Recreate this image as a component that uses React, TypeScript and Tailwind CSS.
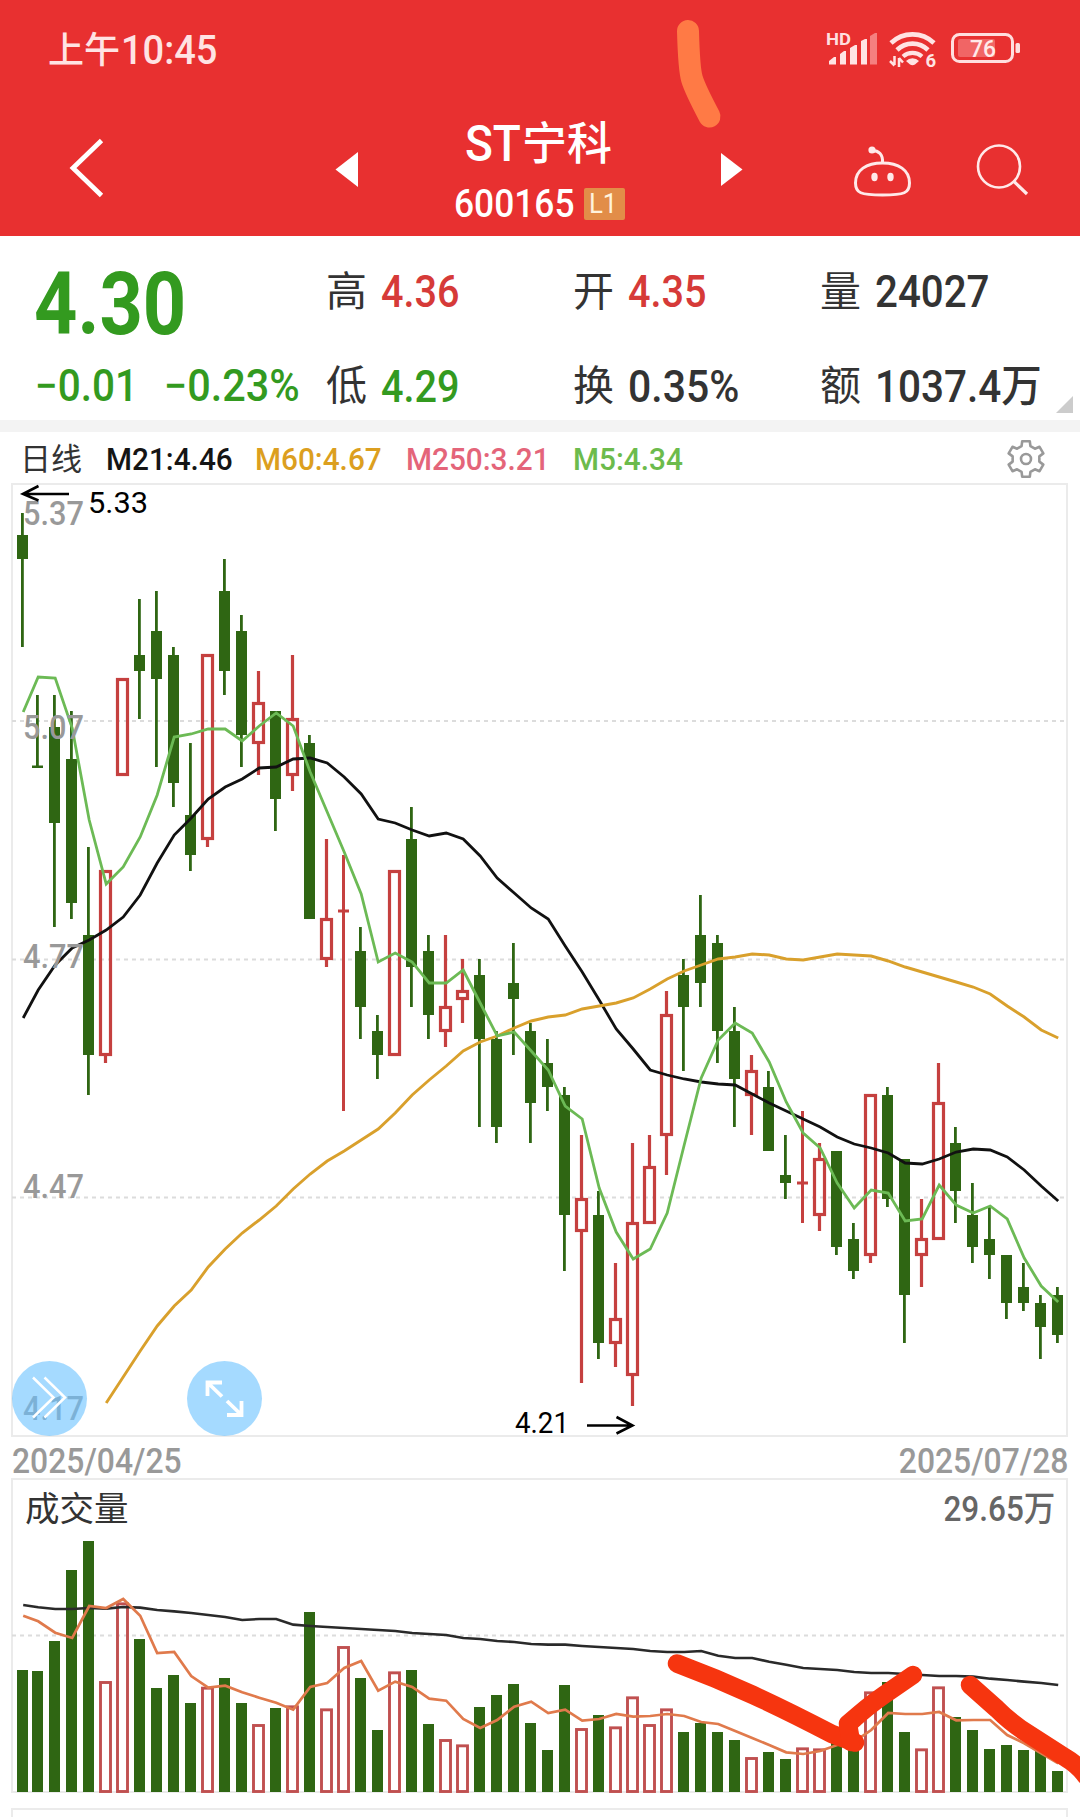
import type { ReactNode } from "react";
import clsx from "clsx";

type Candle = ["g" | "r", number, number, number, number];

// [colour, high, body top, body bottom, low]
const CANDLES: Candle[] = [
  ["g", 513, 535, 559, 647], ["g", 695, 765.5, 768, 768], ["g", 695, 727, 823, 927], ["g", 711, 759, 903, 919],
  ["g", 847, 935, 1055, 1095], ["r", 870, 870, 1056, 1063], ["r", 678, 678, 776, 776], ["g", 599, 655, 671, 719],
  ["g", 591, 631, 679, 767], ["g", 647, 655, 783, 807], ["g", 743, 815, 855, 871], ["r", 654, 654, 840, 847],
  ["g", 559, 591, 671, 695], ["g", 615, 631, 735, 767], ["r", 671, 702, 744, 775], ["g", 711, 711, 799, 831],
  ["r", 655, 718, 776, 791], ["g", 735, 743, 919, 919], ["r", 839, 918, 960, 967], ["r", 855, 911, 911, 1111],
  ["g", 927, 951, 1007, 1039], ["g", 1015, 1031, 1055, 1079], ["r", 870, 870, 1056, 1056], ["g", 807, 839, 967, 1007],
  ["g", 935, 951, 1015, 1039], ["r", 935, 1006, 1032, 1047], ["r", 959, 990, 1000, 1023], ["g", 959, 975, 1039, 1127],
  ["g", 1031, 1039, 1127, 1143], ["g", 943, 983, 999, 1055], ["g", 1023, 1031, 1103, 1143], ["g", 1039, 1063, 1087, 1111],
  ["g", 1087, 1095, 1215, 1271], ["r", 1135, 1198, 1232, 1383], ["g", 1191, 1215, 1343, 1359], ["r", 1263, 1318, 1344, 1367],
  ["r", 1143, 1222, 1376, 1406], ["r", 1135, 1166, 1224, 1224], ["r", 991, 1014, 1136, 1175], ["g", 959, 975, 1007, 1071],
  ["g", 895, 935, 983, 1007], ["g", 935, 943, 1031, 1063], ["g", 1007, 1031, 1079, 1127], ["r", 1055, 1070, 1096, 1135],
  ["g", 1071, 1087, 1151, 1151], ["g", 1135, 1175, 1183, 1199], ["r", 1111, 1183, 1183, 1223], ["r", 1143, 1158, 1216, 1231],
  ["g", 1151, 1151, 1247, 1255], ["g", 1223, 1239, 1271, 1279], ["r", 1094, 1094, 1256, 1263], ["g", 1087, 1095, 1199, 1207],
  ["g", 1159, 1159, 1295, 1343], ["r", 1199, 1238, 1256, 1287], ["r", 1063, 1102, 1240, 1240], ["g", 1127, 1143, 1191, 1223],
  ["g", 1183, 1215, 1247, 1263], ["g", 1207, 1239, 1255, 1279], ["g", 1255, 1255, 1303, 1319], ["g", 1263, 1287, 1303, 1311],
  ["g", 1295, 1303, 1327, 1359], ["g", 1287, 1295, 1335, 1343],
];

const M5 = [
  712, 677, 678, 728, 820, 884, 867, 837, 795, 737, 734, 729, 729, 741, 726, 713, 726, 772, 812, 852, 894, 962, 953, 962,
  983, 983, 970, 1003, 1036, 1032, 1051, 1070, 1106, 1119, 1188, 1232, 1259, 1249, 1213, 1145, 1078, 1040, 1023, 1033,
  1062, 1102, 1133, 1148, 1183, 1208, 1190, 1193, 1221, 1219, 1185, 1205, 1213, 1206, 1219, 1258, 1286, 1302,
];

const M21 = [
  1018, 990, 965, 948, 940, 930, 917, 895, 863, 835, 818, 799, 787, 779, 768, 767, 759, 758, 763, 777, 794, 819, 823, 830,
  836, 833, 839, 856, 878, 893, 908, 919, 946, 972, 1000, 1029, 1049, 1070, 1075, 1079, 1082, 1084, 1085, 1094, 1103, 1111,
  1119, 1127, 1137, 1144, 1148, 1153, 1163, 1164, 1159, 1152, 1149, 1150, 1157, 1170, 1186, 1201,
];

// starts at the sixth candle
const M60 = [
  1403, 1377, 1351, 1326, 1306, 1290, 1267, 1249, 1233, 1220, 1206, 1189, 1174, 1161, 1151, 1140, 1129, 1113, 1095, 1080,
  1066, 1051, 1042, 1036, 1028, 1021, 1017, 1015, 1009, 1006, 1003, 998, 989, 979, 971, 965, 959, 957, 954, 955, 959, 960,
  957, 954, 955, 956, 961, 967, 972, 977, 982, 987, 994, 1006, 1017, 1030, 1038,
];

const VOL = [
  1020, 1023, 933, 720, 633, 1053, 817, 927, 1074, 1035, 1119, 1070, 1044, 1119, 1182, 1134, 1126, 846, 1135, 948, 1044,
  1200, 1024, 1020, 1182, 1227, 1243, 1131, 1095, 1062, 1179, 1260, 1065, 1194, 1155, 1189, 1099, 1182, 1135, 1206, 1179,
  1206, 1230, 1281, 1266, 1287, 1252, 1255, 1225, 1250, 1084, 1056, 1206, 1255, 1069, 1161, 1200, 1257, 1245, 1260, 1263, 1323,
];

const VOL_SLOW = [
  825, 832, 837, 837, 834, 836, 831, 833, 840, 844, 849, 855, 861, 870, 867, 867, 884, 888, 891, 894, 897, 900, 903, 909,
  912, 915, 924, 927, 933, 936, 942, 944, 944, 948, 951, 954, 957, 963, 966, 966, 963, 977, 984, 984, 995, 1004, 1014, 1017,
  1020, 1026, 1029, 1029, 1032, 1035, 1038, 1038, 1040, 1046, 1050, 1055, 1059, 1065,
];

const VOL_FAST = [
  857, 874, 908, 924, 828, 834, 807, 857, 969, 966, 1038, 1073, 1067, 1087, 1103, 1118, 1139, 1071, 1059, 1014, 993, 1082,
  1055, 1071, 1106, 1112, 1167, 1194, 1170, 1130, 1115, 1149, 1139, 1172, 1167, 1152, 1160, 1158, 1152, 1158, 1176, 1182,
  1203, 1224, 1245, 1267, 1272, 1263, 1245, 1235, 1200, 1149, 1152, 1152, 1146, 1171, 1170, 1170, 1215, 1240, 1270, 1300,
];

const GREEN = "#2f6613";
const RED = "#c5403f";

const cx = (i: number) => (i === 0 ? 22.5 : 20.5 + i * 17);
const vy = (v: number) => 1330 + v / 3;
const line = (ys: number[], from = 0) => ys.map((y, i) => `${cx(i + from) + 0.7},${y}`).join(" ");

const gearPath = () => {
  const pts: string[] = [];
  for (let k = 0; k < 6; k++) {
    for (const [r, d] of [[13.6, -19], [18.2, -12], [18.2, 12], [13.6, 19]]) {
      const a = ((k * 60 + d - 90) * Math.PI) / 180;
      pts.push(`${(20 + r * Math.cos(a)).toFixed(2)},${(20 + r * Math.sin(a)).toFixed(2)}`);
    }
  }
  return pts.join(" ");
};

const Num = ({ className, children }: { className?: string; children: ReactNode }) => (
  <span className={clsx("inline-block shrink-0 origin-left whitespace-pre leading-none", className)}>{children}</span>
);

const StatusIcons = () => (
  <svg className="h-[44px] w-[200px]" viewBox="824 28 200 44" fill="none">
    <text x="826" y="45.5" fontSize="16.5" fontWeight="700" fill="#ffdfdf" textLength="25" lengthAdjust="spacingAndGlyphs">HD</text>
    <g fill="#ffe3e3">
      <path d="M829 62l5-4h2v7.500h-7zM840 55l4-3h2v13.500h-6zM850 49l5-3h2v19.500h-7zM861 42l4-2h2v25.500h-6z" />
      <path d="M870 37l5-3h2v31.500h-7z" fill="#f58080" />
      <path d="M906 62a9 9 0 0 1 13 0l-4 3.500q-2.500 1.500-5 0z" />
    </g>
    <g stroke="#ffe3e3" strokeWidth="4.600">
      <path d="M891 44a31 31 0 0 1 43 0" />
      <path d="M897 51a22 22 0 0 1 31 0" />
      <path d="M903 57.500a14.500 14.500 0 0 1 19 0" strokeWidth="4.200" />
    </g>
    <path d="M894.500 57v9M890 62l4.500 4.500M899 68v-9M899 59l4 4.500" stroke="#ffe3e3" strokeWidth="2.500" />
    <text x="925.500" y="67.500" fontSize="18.5" fontWeight="700" fill="#ffe3e3">6</text>
    <rect x="952.500" y="35.500" width="60" height="27" rx="7" stroke="#ffdede" strokeWidth="3" />
    <rect x="958" y="40" width="37" height="18" rx="2" fill="#f16565" />
    <rect x="1015.500" y="44" width="4.500" height="10" rx="1.500" fill="#ffdede" />
    <text x="970" y="58" fontSize="24" fontWeight="500" fill="#ffe9e9" textLength="26" lengthAdjust="spacingAndGlyphs">76</text>
  </svg>
);

const Header = () => (
  <header className="h-[236px] bg-[#e83030] text-white">
    <div className="flex h-[98px] items-center justify-between pl-[48px] pr-[56px]">
      <div className="flex items-center pt-[3px] text-[#ffe3e3]">
        <span className="w-[73px] text-[36px] font-medium leading-none">上午</span>
        <Num className="scale-x-[.95] text-[40px] font-medium">10:45</Num>
      </div>
      <StatusIcons />
    </div>
    <div className="flex h-[138px] justify-between">
      <svg className="h-[138px] w-[440px]" viewBox="0 98 440 138" fill="none">
        <path d="M101.500 140.500L73 168l28.500 27.500" stroke="#fff" strokeWidth="4.800" />
        <path d="M335.500 169.500L358 152v35z" fill="#fff" />
      </svg>
      <div className="flex w-[180px] flex-col pt-[21px]">
        <div className="flex h-[50px] items-center pl-[25px] font-medium">
          <Num className="w-[57px] scale-x-[.92] text-[50px]">ST</Num>
          <span className="whitespace-nowrap text-[45px] leading-none">宁科</span>
        </div>
        <div className="flex h-[50px] items-center pl-[14px] pt-[20px]">
          <Num className="w-[130px] scale-x-[.93] text-[38px] font-medium">600165</Num>
          <span className="flex h-[32px] w-[41px] shrink-0 items-center justify-center rounded-xs bg-[#e28d48]">
            <Num className="origin-center scale-x-[.92] text-[28px] text-[#fff3dc]">L1</Num>
          </span>
        </div>
      </div>
      <svg className="h-[138px] w-[460px]" viewBox="620 98 460 138" fill="none" stroke="#ffe9e9" strokeWidth="3">
        <path d="M721 153l21.500 16.500L721 186z" fill="#fff" stroke="none" />
        <path d="M882.500 163c16 0 27 7 27 20 0 10-5 12-27 12s-27-2-27-12c0-13 11-20 27-20z" />
        <path d="M872 150.500c7 0 11 4 10.500 12" />
        <circle cx="872" cy="150" r="3.600" fill="#ffe9e9" stroke="none" />
        <ellipse cx="874.500" cy="177" rx="3.200" ry="4.200" fill="#ffe9e9" stroke="none" />
        <ellipse cx="890.500" cy="177" rx="3.200" ry="4.200" fill="#ffe9e9" stroke="none" />
        <circle cx="999" cy="166.500" r="21" strokeWidth="2.600" />
        <path d="M1014 181.500l13 12.500" strokeWidth="3.200" />
      </svg>
    </div>
  </header>
);

const Cell = ({ label, value, tone, className }: { label: string; value: ReactNode; tone: string; className: string }) => (
  <div className={clsx("flex items-center", className)}>
    <span className="w-[55px] shrink-0 text-[41px] leading-none text-[#333]">{label}</span>
    <Num className={clsx("text-[44px] font-medium", tone)}>{value}</Num>
  </div>
);

const Quote = () => (
  <section className="flex h-[184px] bg-white">
    <div className="w-[326px] pl-[34px] text-[#339a1f]">
      <div className="flex h-[133px] items-center pt-[3px]">
        <Num className="scale-x-[.87] text-[87px] font-bold">4.30</Num>
      </div>
      <div className="flex h-[33px] items-center">
        <Num className="ml-px w-[129px] scale-x-[.92] text-[44px] font-medium">−0.01</Num>
        <Num className="scale-x-[.94] text-[44px] font-medium">−0.23%</Num>
      </div>
    </div>
    <div className="w-[247px]">
      <Cell label="高" value="4.36" tone="scale-x-[.9] text-[#d63a38]" className="h-[112px]" />
      <Cell label="低" value="4.29" tone="scale-x-[.9] text-[#339a1f]" className="h-[77px]" />
    </div>
    <div className="w-[247px]">
      <Cell label="开" value="4.35" tone="scale-x-[.9] text-[#d63a38]" className="h-[112px]" />
      <Cell label="换" value="0.35%" tone="scale-x-[.93] text-[#333]" className="h-[77px]" />
    </div>
    <div className="w-[236px]">
      <Cell label="量" value="24027" tone="scale-x-[.915] text-[#333]" className="h-[112px]" />
      <Cell label="额" value="1037.4万" tone="scale-x-[.92] text-[#333]" className="h-[77px]" />
    </div>
    <div className="mb-[7px] size-[17px] self-end bg-[#ccc] [clip-path:polygon(100%_0,100%_100%,0_100%)]" />
  </section>
);

const Legend = () => (
  <div className="flex h-[51px] items-center bg-white pb-[2px] pl-[20px] pt-[5px] text-[32px] font-medium">
    <span className="w-[86px] text-[31px] font-normal leading-none text-[#333]">日线</span>
    <Num className="w-[149px] scale-x-[.93] text-[#151515]">M21:4.46</Num>
    <Num className="w-[151px] scale-x-[.93] text-[#dc9f1f]">M60:4.67</Num>
    <Num className="w-[167px] scale-x-[.93] text-[#e4657a]">M250:3.21</Num>
    <Num className="w-[433px] scale-x-[.93] text-[#6cbb4c]">M5:4.34</Num>
    <svg className="size-[40px]" viewBox="0 0 40 40" fill="none" stroke="#999" strokeWidth="2.600" strokeLinejoin="round">
      <polygon points={gearPath()} />
      <circle cx="20" cy="20" r="5" />
    </svg>
  </div>
);

const AxisLabel = ({ y, children }: { y: number; children: string }) => (
  <text x="23" y={y} fontSize="34" fontWeight="500" fill="#999" textLength="61" lengthAdjust="spacingAndGlyphs">{children}</text>
);

const KLine = () => (
  <svg className="block h-[954px] w-[1080px] overflow-visible" viewBox="0 483 1080 954" fill="none">
    <rect x="12" y="484" width="1055" height="952" stroke="#ebebeb" strokeWidth="2" />
    {[721, 959.5, 1197.5].map((y) => (
      <path key={y} d={`M12 ${y}H1065`} stroke="#dcdcdc" strokeWidth="2" strokeDasharray="4 4" />
    ))}
    {CANDLES.map(([kind, high, top, bottom, low], i) => {
      const x = cx(i);
      if (kind === "g") {
        return (
          <g key={i} fill={GREEN}>
            <rect x={x - 1.5} y={high} width="2.800" height={low - high} />
            <rect x={x - 5.5} y={top} width="11" height={bottom - top} />
          </g>
        );
      }
      if (top === bottom) {
        return <path key={i} d={`M${x} ${high}V${low}M${x - 5.500} ${top}h11`} stroke={RED} strokeWidth="3" />;
      }
      return (
        <g key={i} stroke={RED} strokeWidth="3.200">
          <path d={`M${x} ${high}V${top + 1}M${x} ${bottom - 1}V${low}`} />
          <rect x={x - 5} y={top + 1.5} width="10" height={bottom - top - 3} />
        </g>
      );
    })}
    <polyline points={line(M21)} stroke="#111" strokeWidth="2.800" />
    <polyline points={line(M60, 5)} stroke="#d9a02c" strokeWidth="2.900" />
    <polyline points={line(M5)} stroke="#6cba55" strokeWidth="2.800" />
    <AxisLabel y={525}>5.37</AxisLabel>
    <AxisLabel y={739}>5.07</AxisLabel>
    <AxisLabel y={968}>4.77</AxisLabel>
    <AxisLabel y={1198}>4.47</AxisLabel>
    <AxisLabel y={1420}>4.17</AxisLabel>
    <g stroke="#000" strokeWidth="2.600">
      <path d="M69 494H23M38.500 486L23 494l15.500 6.500" />
      <path d="M587 1425.500h46M616.500 1417l16 8.500-16 8" />
    </g>
    <text x="88" y="513" fontSize="29.500" fill="#000" textLength="60" lengthAdjust="spacingAndGlyphs">5.33</text>
    <text x="515" y="1432.500" fontSize="29.500" fill="#000" textLength="54" lengthAdjust="spacingAndGlyphs">4.21</text>
    <circle cx="49.500" cy="1398.500" r="37.500" fill="rgb(105 193 255 / .6)" />
    <circle cx="224.500" cy="1398.500" r="37.500" fill="rgb(105 193 255 / .6)" />
    <path d="M33 1377.500l20.500 20-20.500 20M44.500 1377.500l20.500 20-20.500 20" stroke="#fff" strokeWidth="2.500" />
    <path
      d="M222 1382.500h-14.500V1396M207.500 1382.500L222 1396.500M227 1415h14.500v-14M241.500 1415L227 1401"
      stroke="#fff"
      strokeWidth="3.800"
    />
  </svg>
);

const Volume = () => (
  <section className="relative">
    <svg className="block h-[339px] w-[1080px]" viewBox="0 1478 1080 339" fill="none">
      <rect x="12" y="1479" width="1055" height="313" stroke="#ebebeb" strokeWidth="2" />
      <rect x="12" y="1809" width="1055" height="40" stroke="#ebebeb" strokeWidth="2" />
      <path d="M12 1635.500H1065" stroke="#dcdcdc" strokeWidth="2" strokeDasharray="4 4" />
      {VOL.map((v, i) =>
        CANDLES[i][0] === "g" ? (
          <rect key={i} x={cx(i) - 5.5} y={vy(v)} width="11" height={1792 - vy(v)} fill={GREEN} />
        ) : (
          <rect key={i} x={cx(i) - 5} y={vy(v) + 1.5} width="10" height={1791.5 - vy(v) - 1.5} stroke="#c05050" strokeWidth="2.900" />
        )
      )}
      <polyline points={line(VOL_SLOW.map(vy))} stroke="#2a2a2a" strokeWidth="2.600" />
      <polyline points={line(VOL_FAST.map(vy))} stroke="#e07a4c" strokeWidth="2.700" />
    </svg>
    <div className="absolute inset-x-0 top-[13px] flex h-[36px] items-center justify-between pl-[25px] pr-[25px]">
      <span className="text-[34.5px] leading-none text-[#333]">成交量</span>
      <Num className="origin-right scale-x-[.9] text-[35px] font-medium text-[#666]">29.65万</Num>
    </div>
  </section>
);

const Marks = () => (
  <svg className="pointer-events-none absolute inset-0 h-[1817px] w-[1080px]" fill="none" strokeLinecap="round" strokeLinejoin="round">
    <path d="M688 31q1 38 4 48t17.500 37.500" stroke="#ff7a45" strokeWidth="22" />
    <g stroke="#f6350f" strokeWidth="18.500">
      <path d="M677 1663.500Q716 1678 753 1695T832 1734L855 1742.500" />
      <path d="M851 1742L848 1724Q868 1706 884 1695T913 1675" />
      <path d="M970 1685L997 1709Q1012 1724 1030 1735L1066 1758Q1078 1765 1086 1776" />
    </g>
  </svg>
);

export default function App() {
  return (
    <div className="relative h-[1817px] w-[1080px] overflow-hidden bg-white font-['Roboto','Noto_Sans_CJK_SC',sans-serif]">
      <Header />
      <Quote />
      <div className="h-[12px] bg-[#f3f3f3]" />
      <Legend />
      <KLine />
      <div className="flex h-[41px] items-center justify-between px-[12px] pt-[7px] text-[35px] font-medium text-[#999]">
        <Num className="scale-x-[.91]">2025/04/25</Num>
        <Num className="origin-right scale-x-[.91]">2025/07/28</Num>
      </div>
      <Volume />
      <Marks />
    </div>
  );
}
